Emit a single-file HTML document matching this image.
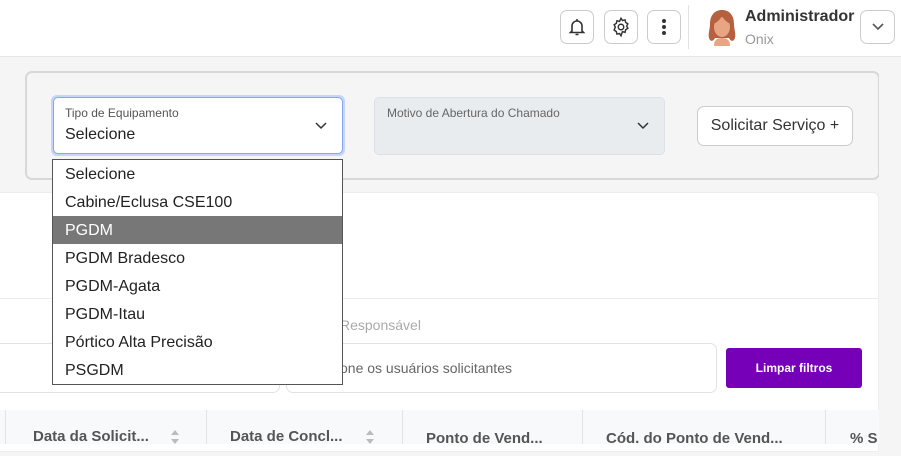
<!DOCTYPE html>
<html><head><meta charset="utf-8"><style>
*{box-sizing:border-box;margin:0;padding:0}
body{width:901px;height:444px;overflow:hidden;background:#f5f5f5;font-family:"Liberation Sans",sans-serif;position:relative}
.abs{position:absolute}
.hdr{left:0;top:0;width:901px;height:57px;background:#fff;border-bottom:1px solid #e6e6e6}
.ib{width:34px;height:34px;border:1.5px solid #ccc;border-radius:7px;top:10px;background:#fff;display:flex;align-items:center;justify-content:center}
.card{left:25px;top:71px;width:855px;height:109px;border:2px solid #d8d8d8;border-radius:7px;background:#f5f5f5}
.w{left:0;top:192px;width:879px;height:260px;background:#fff;border-top-right-radius:6px;border:1px solid #eee;border-left:none}
.opt{height:28px;line-height:30px;padding-left:12px;font-size:16px;color:#222}
.th{top:420px;height:34px;background:transparent;font-weight:bold;font-size:15px;color:#555;line-height:34px}
</style></head><body>
<div class="abs hdr"></div>
<div class="abs ib" style="left:560px"><svg width="20" height="20" viewBox="0 0 20 20" fill="none" stroke="#333" stroke-width="1.6"><path d="M5 14V9a5 5 0 0 1 10 0v5l1.5 1.5h-13z"/><path d="M8.5 17.5h3M10 2v2"/></svg></div>
<div class="abs ib" style="left:604px"><svg width="22" height="22" viewBox="0 0 24 24" fill="none" stroke="#333" stroke-width="1.6"><circle cx="12" cy="12" r="3"/><path d="M12 2.5l1.6 2.4 2.8-.7.7 2.8 2.4 1.6-1.3 2.4 1.3 2.4-2.4 1.6-.7 2.8-2.8-.7L12 21.5l-1.6-2.4-2.8.7-.7-2.8-2.4-1.6L5.8 12 4.5 9.6l2.4-1.6.7-2.8 2.8.7z"/></svg></div>
<div class="abs ib" style="left:647px"><svg width="6" height="20"><circle cx="3" cy="4" r="2" fill="#333"/><circle cx="3" cy="10" r="2" fill="#333"/><circle cx="3" cy="16" r="2" fill="#333"/></svg></div>
<div class="abs" style="left:688px;top:5px;width:1px;height:44px;background:#e3e3e3"></div>
<svg class="abs" style="left:704px;top:8px" width="36" height="38" viewBox="0 0 36 38"><path d="M6 32c-3-4 0-10 0-16C6 7 11 2 18 2s12 5 12 14c0 6 3 12 0 16-2 2-4 0-5-2H11c-1 2-3 4-5 2z" fill="#b5603f"/><ellipse cx="18" cy="19" rx="8" ry="10" fill="#e8a583"/><path d="M10 38c0-6 3-8 8-8s8 2 8 8z" fill="#e8a583"/><path d="M9 16c3-1 7-4 9-8 2 4 6 7 9 8 0-7-4-11-9-11s-9 4-9 11z" fill="#b5603f"/></svg>
<div class="abs" style="left:745px;top:8px;font-weight:bold;font-size:16px;color:#333">Administrador</div>
<div class="abs" style="left:745px;top:31px;font-size:14px;color:#999">Onix</div>
<div class="abs ib" style="left:860px;width:35px"><svg width="12" height="8"><path d="M1 1l5 5 5-5" fill="none" stroke="#555" stroke-width="1.6"/></svg></div>

<div class="abs card"></div>
<div class="abs" style="left:51px;top:95px;width:294px;height:61px;border:3px solid #c6d4fb;border-radius:6px"></div>
<div class="abs" style="left:53px;top:97px;width:290px;height:57px;border:1px solid #86a7f0;border-radius:5px;background:#fff"></div>
<div class="abs" style="left:65px;top:106px;font-size:12px;color:#555">Tipo de Equipamento</div>
<div class="abs" style="left:65px;top:126px;font-size:16px;color:#222">Selecione</div>
<svg class="abs" style="left:315px;top:122px" width="12" height="8"><path d="M1 1l5 5 5-5" fill="none" stroke="#333" stroke-width="1.5"/></svg>
<div class="abs" style="left:374px;top:97px;width:291px;height:58px;border:1px solid #dde1e5;border-radius:5px;background:#e9ecef"></div>
<div class="abs" style="left:387px;top:106px;font-size:12px;color:#666">Motivo de Abertura do Chamado</div>
<svg class="abs" style="left:637px;top:122px" width="12" height="8"><path d="M1 1l5 5 5-5" fill="none" stroke="#333" stroke-width="1.5"/></svg>
<div class="abs" style="left:697px;top:106px;width:156px;height:40px;border:1.5px solid #ccc;border-radius:7px;background:#fff;font-size:16px;color:#333;text-align:center;line-height:38px">Solicitar Serviço +</div>

<div class="abs w"></div>
<div class="abs" style="left:0;top:298px;width:879px;height:1px;background:#ececec"></div>
<div class="abs" style="left:340px;top:317px;font-size:14px;color:#aaa">Responsável</div>
<div class="abs" style="left:0;top:343px;width:280px;height:50px;border:1px solid #e2e2e2;border-left:none;border-radius:0 7px 7px 0;background:#fff"></div>
<div class="abs" style="left:286px;top:343px;width:431px;height:50px;border:1px solid #e2e2e2;border-radius:7px;background:#fff"></div>
<div class="abs" style="left:340px;top:360px;font-size:14px;color:#666">one os usuários solicitantes</div>
<div class="abs" style="left:726px;top:348px;width:136px;height:40px;background:#7500b8;border-radius:3px;color:#fff;font-size:12px;font-weight:bold;text-align:center;line-height:40px">Limpar filtros</div>
<div class="abs" style="left:879px;top:57px;width:22px;height:387px;background:#f5f5f5"></div>

<div class="abs" style="left:0;top:410px;width:879px;height:34px;background:#f8f9fa"></div>
<div class="abs th" style="left:33px">Data da Solicit...</div>
<div class="abs th" style="left:230px">Data de Concl...</div>
<div class="abs th" style="left:426px;top:422px">Ponto de Vend...</div>
<div class="abs th" style="left:606px;top:422px">Cód. do Ponto de Vend...</div>
<div class="abs th" style="left:850px;top:422px">% S</div>
<div class="abs" style="left:5px;top:410px;width:1px;height:34px;background:#e3e3e3"></div>
<div class="abs" style="left:206px;top:410px;width:1px;height:34px;background:#e3e3e3"></div>
<div class="abs" style="left:402px;top:410px;width:1px;height:34px;background:#e3e3e3"></div>
<div class="abs" style="left:582px;top:410px;width:1px;height:34px;background:#e3e3e3"></div>
<div class="abs" style="left:825px;top:410px;width:1px;height:34px;background:#e3e3e3"></div>
<svg class="abs" style="left:171px;top:430px" width="8" height="14"><path d="M0 5l4-5 4 5zM0 9l4 5 4-5z" fill="#bbb"/></svg>
<svg class="abs" style="left:366px;top:430px" width="8" height="14"><path d="M0 5l4-5 4 5zM0 9l4 5 4-5z" fill="#bbb"/></svg>

<div class="abs" style="left:52px;top:159px;width:291px;height:226px;border:1px solid #555;background:#fff">
<div class="opt">Selecione</div>
<div class="opt">Cabine/Eclusa CSE100</div>
<div class="opt" style="background:#777;color:#fff">PGDM</div>
<div class="opt">PGDM Bradesco</div>
<div class="opt">PGDM-Agata</div>
<div class="opt">PGDM-Itau</div>
<div class="opt">Pórtico Alta Precisão</div>
<div class="opt">PSGDM</div>
</div>
</body></html>
